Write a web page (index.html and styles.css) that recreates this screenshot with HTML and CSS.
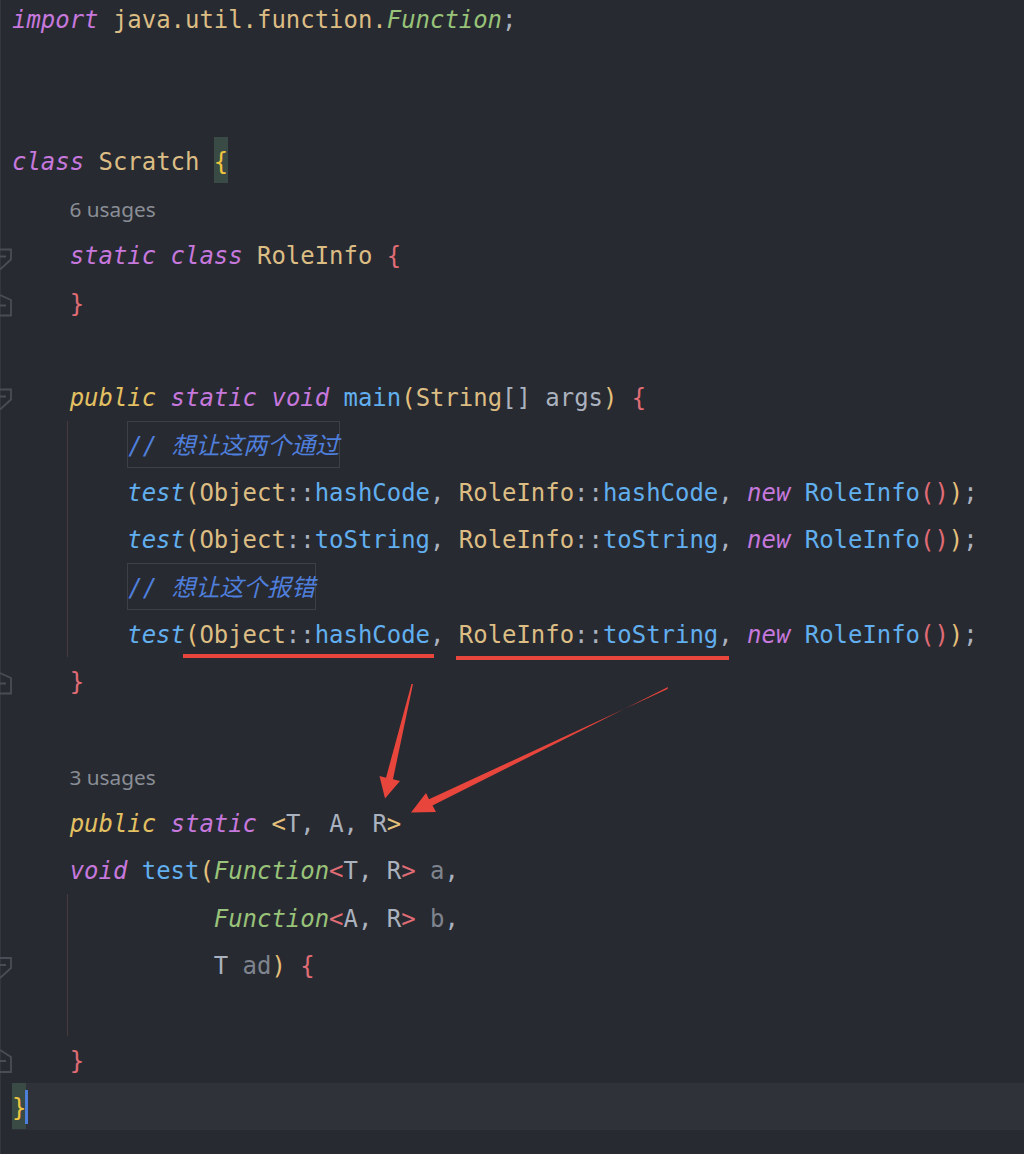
FILE: index.html
```html
<!DOCTYPE html>
<html lang="zh">
<head>
<meta charset="utf-8">
<title>Scratch.java</title>
<link rel="stylesheet" href="styles.css">
</head>
<body>
<div class="editor">
  <div class="line"><div class="gut"></div><div class="code"><span class="k">import</span> <span class="t">java.util.function.</span><span class="g">Function</span><span class="p">;</span></div></div>
  <div class="line"><div class="gut"></div><div class="code"></div></div>
  <div class="line"><div class="gut"></div><div class="code"></div></div>
  <div class="line"><div class="gut"></div><div class="code"><span class="k">class</span> <span class="t">Scratch</span> <span class="by hl">{</span></div></div>
  <div class="line"><div class="gut"></div><div class="code hint">6 usages</div></div>
  <div class="line"><div class="gut"><svg class="fold" viewBox="0 0 12 47"><path d="M0 18.5H11V28.5L0 38.5M0 25.5H6"/></svg></div><div class="code">    <span class="k">static</span> <span class="k">class</span> <span class="t">RoleInfo</span> <span class="br">{</span></div></div>
  <div class="line"><div class="gut"><svg class="fold" viewBox="0 0 12 47"><path d="M0 16L11 21V36.5H0M0 26.5H6"/></svg></div><div class="code">    <span class="br">}</span></div></div>
  <div class="line"><div class="gut"></div><div class="code"></div></div>
  <div class="line"><div class="gut"><svg class="fold" viewBox="0 0 12 47"><path d="M0 16.5H11V26.5L0 36.5M0 23.5H6"/></svg></div><div class="code">    <span class="ky">public</span> <span class="k">static</span> <span class="k">void</span> <span class="m">main</span><span class="by">(</span><span class="t">String</span><span class="p">[]</span> <span class="p">args</span><span class="by">)</span> <span class="br">{</span></div></div>
  <div class="line"><div class="gut"></div><div class="code guide">        <span class="box c">// 想让这两个通过</span></div></div>
  <div class="line"><div class="gut"></div><div class="code guide">        <span class="mi">test</span><span class="by">(</span><span class="t">Object</span><span class="p">::</span><span class="m">hashCode</span><span class="p">, </span><span class="t">RoleInfo</span><span class="p">::</span><span class="m">hashCode</span><span class="p">, </span><span class="k">new</span> <span class="m">RoleInfo</span><span class="br">()</span><span class="by">)</span><span class="p">;</span></div></div>
  <div class="line"><div class="gut"></div><div class="code guide">        <span class="mi">test</span><span class="by">(</span><span class="t">Object</span><span class="p">::</span><span class="m">toString</span><span class="p">, </span><span class="t">RoleInfo</span><span class="p">::</span><span class="m">toString</span><span class="p">, </span><span class="k">new</span> <span class="m">RoleInfo</span><span class="br">()</span><span class="by">)</span><span class="p">;</span></div></div>
  <div class="line"><div class="gut"></div><div class="code guide">        <span class="box c">// 想让这个报错</span></div></div>
  <div class="line"><div class="gut"></div><div class="code guide">        <span class="mi">test</span><span class="by">(</span><span class="t">Object</span><span class="p">::</span><span class="m">hashCode</span><span class="p">, </span><span class="t">RoleInfo</span><span class="p">::</span><span class="m">toString</span><span class="p">, </span><span class="k">new</span> <span class="m">RoleInfo</span><span class="br">()</span><span class="by">)</span><span class="p">;</span></div></div>
  <div class="line"><div class="gut"><svg class="fold" viewBox="0 0 12 47"><path d="M0 16L11 21V36.5H0M0 26.5H6"/></svg></div><div class="code">    <span class="br">}</span></div></div>
  <div class="line"><div class="gut"></div><div class="code"></div></div>
  <div class="line"><div class="gut"></div><div class="code hint">3 usages</div></div>
  <div class="line"><div class="gut"></div><div class="code">    <span class="ky">public</span> <span class="k">static</span> <span class="by">&lt;</span><span class="tp">T</span><span class="p">, </span><span class="tp">A</span><span class="p">, </span><span class="tp">R</span><span class="by">&gt;</span></div></div>
  <div class="line"><div class="gut"></div><div class="code">    <span class="k">void</span> <span class="m">test</span><span class="by">(</span><span class="g">Function</span><span class="br">&lt;</span><span class="tp">T</span><span class="p">, </span><span class="tp">R</span><span class="br">&gt;</span> <span class="v">a</span><span class="p">,</span></div></div>
  <div class="line"><div class="gut"></div><div class="code guide">              <span class="g">Function</span><span class="br">&lt;</span><span class="tp">A</span><span class="p">, </span><span class="tp">R</span><span class="br">&gt;</span> <span class="v">b</span><span class="p">,</span></div></div>
  <div class="line"><div class="gut"><svg class="fold" viewBox="0 0 12 47"><path d="M0 17H11V27L0 37M0 24H6"/></svg></div><div class="code guide">              <span class="tp">T</span> <span class="v">ad</span><span class="by">)</span> <span class="br">{</span></div></div>
  <div class="line"><div class="gut"></div><div class="code guide"></div></div>
  <div class="line"><div class="gut"><svg class="fold" viewBox="0 0 12 47"><path d="M0 14L11 21V36H0M0 25H6"/></svg></div><div class="code">    <span class="br">}</span></div></div>
  <div class="line"><div class="gut"></div><div class="code cur"><span class="by hl">}</span><span class="caret"></span></div></div>
</div>

<svg class="marks" viewBox="0 0 1024 1154" aria-hidden="true">
  <rect x="183" y="654" width="251" height="4"/>
  <rect x="456" y="656" width="273" height="4"/>
  <polygon points="413,684 393,779.2 400,781 385,798.5 379.5,776 386,777.8 411.5,684"/>
  <polygon points="668,687 432.5,805.5 436,812 411,812.5 426,793 429,799.2 667.5,689"/>
</svg>
</body>
</html>
```

FILE: styles.css
```css
html, body {
  margin: 0;
  padding: 0;
}

body {
  width: 1024px;
  height: 1154px;
  overflow: hidden;
  position: relative;
  background: linear-gradient(#34363d, #34363d) no-repeat 0 0 / 1px 100%, #282a31;
}

.editor {
  margin-top: -5px;
  font-family: "DejaVu Sans Mono", "Noto Sans CJK SC", monospace;
  font-size: 23.95px;
  color: #abb2bf;
}

.line {
  display: flex;
  height: 47.3px;
}

.gut {
  width: 12px;
  flex: none;
}

.fold {
  display: block;
  width: 12px;
  height: 47px;
  fill: none;
  stroke: #4a4d55;
  stroke-width: 1.8;
}

.code {
  flex: 1;
  white-space: pre;
  line-height: 51px;
  height: 47.3px;
}

.guide {
  background: linear-gradient(#463a3c, #463a3c) no-repeat 55px 0 / 1px 100%;
}

.cur {
  background: #2f3239;
}

.hint {
  font-family: "Noto Sans", sans-serif;
  font-size: 20.8px;
  color: #8a8e96;
  padding-left: 57.4px;
}

.k { color: #c678dd; font-style: italic; }
.ky { color: #e3c062; font-style: italic; }
.t { color: #dcbd84; }
.g { color: #98c379; font-style: italic; }
.m { color: #61afef; }
.mi { color: #61afef; font-style: italic; }
.p { color: #abb2bf; }
.v { color: #7f848e; }
.tp { color: #aab2bf; }
.by { color: #e5c07b; }
.br { color: #e06c75; }
.c { color: #4f7fdc; font-style: italic; }

.hl {
  display: inline-block;
  vertical-align: top;
  height: 46px;
  background: #3a4a44;
  color: #efc440;
}

.box {
  display: inline-block;
  vertical-align: top;
  height: 47.3px;
  box-sizing: border-box;
  border: 1px solid #3d4047;
  line-height: 49px;
}

.caret {
  display: inline-block;
  vertical-align: top;
  width: 3px;
  height: 34px;
  margin-top: 7px;
  margin-left: -1px;
  background: #4c7fd9;
}

.marks {
  position: absolute;
  left: 0;
  top: 0;
  width: 1024px;
  height: 1154px;
  fill: #e8453c;
  pointer-events: none;
}
```
